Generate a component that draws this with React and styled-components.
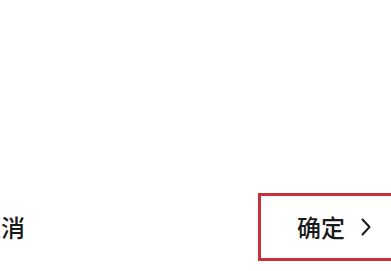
import React from "react";
import styled, { createGlobalStyle } from "styled-components";

const Global = createGlobalStyle`
  html, body { margin: 0; padding: 0; background: #ffffff; overflow: hidden; }
  body { font-family: "Noto Sans CJK SC", "Noto Sans", sans-serif; }
`;

const Page = styled.div`
  width: 391px;
  height: 271px;
  display: flex;
  flex-direction: column;
  justify-content: flex-end;
  background: #ffffff;
  overflow: hidden;
`;

const Footer = styled.div`
  display: flex;
  align-items: center;
  justify-content: space-between;
  height: 68px;
  margin-bottom: 10px;
`;

const CancelButton = styled.button`
  border: none;
  background: none;
  padding: 0;
  margin-left: -23px;
  font-family: inherit;
  font-size: 24px;
  font-weight: 500;
  line-height: 1;
  color: #1a1a1a;
  white-space: nowrap;
`;

const ConfirmButton = styled.button`
  box-sizing: border-box;
  display: flex;
  align-items: center;
  gap: 16px;
  width: 150px;
  height: 68px;
  margin-right: -17px;
  padding: 0 0 0 36px;
  border: 3px solid #c8313c;
  background: #ffffff;
  font-family: inherit;
  font-size: 24px;
  font-weight: 500;
  line-height: 1;
  color: #1a1a1a;
  white-space: nowrap;
`;

const Chevron = () => (
  <svg width="10" height="18" viewBox="0 0 10 18" fill="none">
    <polyline points="1.5,1.5 8.5,9 1.5,16.5" stroke="#1a1a1a" strokeWidth="2" strokeLinecap="round" strokeLinejoin="round" />
  </svg>
);

export default function App() {
  return (
    <>
      <Global />
      <Page>
        <Footer>
          <CancelButton>取消</CancelButton>
          <ConfirmButton>
            <span>确定</span>
            <Chevron />
          </ConfirmButton>
        </Footer>
      </Page>
    </>
  );
}
